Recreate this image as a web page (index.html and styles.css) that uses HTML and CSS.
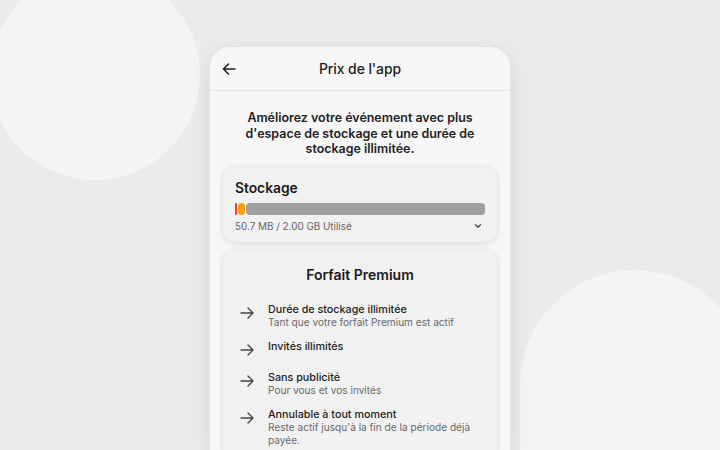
FILE: index.html
```html
<!DOCTYPE html>
<html lang="fr">
<head>
<meta charset="utf-8">
<link rel="stylesheet" href="styles.css">
</head>
<body>
<div class="bubble bubble-a"></div>
<div class="bubble bubble-b"></div>
<main class="phone">
  <header class="topbar">
    <svg class="back" width="16" height="16" viewBox="0 0 16 16" fill="none" stroke="#1e1e1e" stroke-width="1.6" stroke-linecap="round" stroke-linejoin="round"><path d="M14 8H2.5M7.5 3 2.5 8l5 5"/></svg>
    <h1 class="title">Prix de l'app</h1>
  </header>
  <section class="content">
    <p class="intro">Améliorez votre événement avec plus d'espace de stockage et une durée de stockage illimitée.</p>
    <div class="card storage">
      <h2 class="card-title">Stockage</h2>
      <div class="bar">
        <span class="seg red"></span>
        <span class="seg orange"></span>
        <span class="seg rest"></span>
      </div>
      <div class="usage">
        <span>50.7 MB / 2.00 GB Utilisé</span>
        <svg width="8" height="6" viewBox="0 0 8 6" fill="none" stroke="#444" stroke-width="1.3" stroke-linecap="round" stroke-linejoin="round"><path d="M1.5 1.8 4 4.2l2.5-2.4"/></svg>
      </div>
    </div>
    <div class="card premium">
      <h2 class="card-title center">Forfait Premium</h2>
      <ul class="features">
        <li class="feature">
          <svg class="arrow" width="14" height="12" viewBox="0 0 14 12" fill="none" stroke="#444" stroke-width="1.4" stroke-linecap="round" stroke-linejoin="round"><path d="M1 6h12M8 1l5 5-5 5"/></svg>
          <div><div class="f-title">Durée de stockage illimitée</div><div class="f-sub">Tant que votre forfait Premium est actif</div></div>
        </li>
        <li class="feature">
          <svg class="arrow" width="14" height="12" viewBox="0 0 14 12" fill="none" stroke="#444" stroke-width="1.4" stroke-linecap="round" stroke-linejoin="round"><path d="M1 6h12M8 1l5 5-5 5"/></svg>
          <div><div class="f-title">Invités illimités</div></div>
        </li>
        <li class="feature">
          <svg class="arrow" width="14" height="12" viewBox="0 0 14 12" fill="none" stroke="#444" stroke-width="1.4" stroke-linecap="round" stroke-linejoin="round"><path d="M1 6h12M8 1l5 5-5 5"/></svg>
          <div><div class="f-title">Sans publicité</div><div class="f-sub">Pour vous et vos invités</div></div>
        </li>
        <li class="feature">
          <svg class="arrow" width="14" height="12" viewBox="0 0 14 12" fill="none" stroke="#444" stroke-width="1.4" stroke-linecap="round" stroke-linejoin="round"><path d="M1 6h12M8 1l5 5-5 5"/></svg>
          <div><div class="f-title">Annulable à tout moment</div><div class="f-sub">Reste actif jusqu'à la fin de la période déjà payée.</div></div>
        </li>
      </ul>
    </div>
  </section>
</main>
</body>
</html>
```
FILE: styles.css
```css
* { box-sizing: border-box; }
html, body { margin: 0; height: 100%; }
body {
  width: 720px; height: 450px; overflow: hidden; position: relative;
  background: #ebebec;
  font-family: Inter, "Noto Sans", sans-serif;
  color: #1e1e1e;
}
.bubble { position: absolute; border-radius: 50%; background: #f4f4f4; }
.bubble-a { left: -10px; top: -30px; width: 210px; height: 210px; }
.bubble-b { left: 520px; top: 270px; width: 230px; height: 180px; border-radius: 115px 115px 0 0; }
.phone {
  position: relative;
  margin: 47px 0 0 210px;
  width: 300px; height: 403px;
  overflow: hidden;
  background: #f7f7f7;
  border-radius: 20px 20px 0 0;
  box-shadow: 0 4px 22px rgba(0,0,0,0.09);
}
.topbar {
  height: 44px; display: flex; align-items: center; justify-content: center;
  border-bottom: 1px solid #e3e3e3; position: relative;
}
.back { position: absolute; left: 11px; top: 14px; }
.title { margin: 0; font-size: 14px; font-weight: 500; letter-spacing: -0.1px; }
.content { padding: 19px 13px 0; }
.intro {
  margin: 0 8px; text-align: center; font-size: 12.45px; line-height: 15.6px;
  font-weight: 600; color: #222;
}
.card {
  background: #f1f1f1; border-radius: 12px;
  box-shadow: 0 1px 6px rgba(0,0,0,0.14);
}
.storage { margin-top: 10px; padding: 11px 12px 10px; height: 75px; }
.card-title { margin: 0; font-size: 13.8px; line-height: 20px; font-weight: 600; color: #1a1a1a; }
.card-title.center { text-align: center; font-size: 14px; }
.bar { display: flex; gap: 1px; height: 12px; margin-top: 5px; }
.seg { display: block; height: 12px; border-radius: 3px; }
.red { width: 2px; background: #e0453a; border-radius: 1px; }
.orange { width: 7px; background: #f6a00d; border-radius: 4px; }
.rest { flex: 1; background: #9f9f9f; border-radius: 4px; }
.usage {
  display: flex; justify-content: space-between; align-items: center;
  margin-top: 5px; font-size: 9.9px; color: #666; padding-right: 3px;
}
.premium { margin-top: 8px; padding: 15px 12px 0; height: 202px; border-radius: 12px 12px 0 0; }
.features { list-style: none; margin: 19px 0 0; padding: 0 0 0 5px; }
.feature { display: flex; gap: 14px; margin-bottom: 12px; min-height: 19px; }
.feature:last-child { margin-bottom: 0; }
.arrow { margin-top: 3px; flex: none; }
.f-title { font-size: 10.75px; font-weight: 500; color: #222; line-height: 12.5px; }
.f-sub { font-size: 10.1px; color: #6a6a6a; line-height: 12.5px; max-width: 215px; }
```
